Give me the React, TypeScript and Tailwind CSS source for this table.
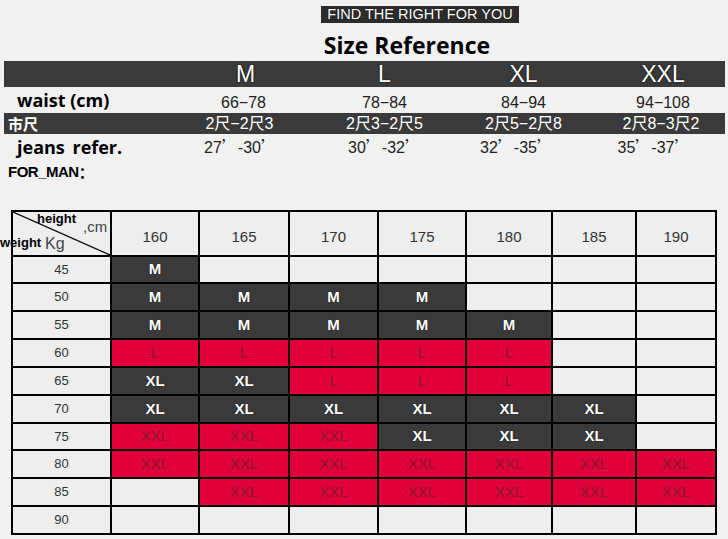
import React from 'react';

const sizes = ['M', 'L', 'XL', 'XXL'];
const waist = ['66−78', '78−84', '84−94', '94−108'];
const chi = ['2尺−2尺3', '2尺3−2尺5', '2尺5−2尺8', '2尺8−3尺2'];
const jeans = [['27', '30'], ['30', '32'], ['32', '35'], ['35', '37']];

const heights = [160, 165, 170, 175, 180, 185, 190];

// one entry per weight row, one letter per height column
const chart: [number, string[]][] = [
  [45, ['M', '', '', '', '', '', '']],
  [50, ['M', 'M', 'M', 'M', '', '', '']],
  [55, ['M', 'M', 'M', 'M', 'M', '', '']],
  [60, ['L', 'L', 'L', 'L', 'L', '', '']],
  [65, ['XL', 'XL', 'L', 'L', 'L', '', '']],
  [70, ['XL', 'XL', 'XL', 'XL', 'XL', 'XL', '']],
  [75, ['XXL', 'XXL', 'XXL', 'XL', 'XL', 'XL', '']],
  [80, ['XXL', 'XXL', 'XXL', 'XXL', 'XXL', 'XXL', 'XXL']],
  [85, ['', 'XXL', 'XXL', 'XXL', 'XXL', 'XXL', 'XXL']],
  [90, ['', '', '', '', '', '', '']],
];

const rowHeights = ['h-[25px]', 'h-[26px]', 'h-[26px]', 'h-[26px]', 'h-[26px]', 'h-[26px]', 'h-[25px]', 'h-[26px]', 'h-[26px]', 'h-[26px]'];

function Cell({ size }: { size: string }) {
  if (size === 'M' || size === 'XL') {
    return (
      <div className="bg-[#3a3a3a] flex items-center justify-center text-white font-bold text-[15px] [text-shadow:0_0_1px_#000]">
        {size}
      </div>
    );
  }
  if (size === 'L' || size === 'XXL') {
    return (
      <div className="bg-[#e2003a] flex items-center justify-center text-[#86182e] text-[15px]">
        {size}
      </div>
    );
  }
  return <div className="bg-[#eeeeee]" />;
}

export default function App() {
  return (
    <div className="w-[728px] h-[539px] overflow-hidden bg-[#f1f1f1] font-['Liberation_Sans',Arial,sans-serif] text-[#222]">
      {/* --- TITLE --- */}
      <div className="pt-[6px] flex flex-col items-center">
        <div className="ml-[112px] w-[198px] h-[17px] bg-[#2c2c2c] flex items-center justify-center text-white text-[14.5px] leading-none [text-shadow:0_0_1px_#000]">
          FIND THE RIGHT FOR YOU
        </div>
        <h1 className="mt-[6px] ml-[86px] h-[32px] font-['Open_Sans',sans-serif] font-bold text-[23px] leading-[32px] text-black">
          Size Reference
        </h1>
      </div>

      {/* --- SIZE TABLE --- */}
      <div className="ml-[4px] w-[721px]">
        <div className="h-[26px] bg-[#3a3a3a] grid grid-cols-[172px_139px_139px_139px_132px] items-center text-white text-[23px] leading-none [text-shadow:0_0_2px_#000]">
          <div />
          {sizes.map((s, i) => (
            <div key={s} className={i === 3 ? 'text-center pl-2' : 'text-center'}>{s}</div>
          ))}
        </div>
        <div className="h-[26px] grid grid-cols-[172px_139px_139px_139px_132px] items-center">
          <div className="pl-[13px] font-['Open_Sans',sans-serif] font-bold text-[18px] leading-none text-black">waist (cm)</div>
          {waist.map((w, i) => (
            <div key={w} className={`text-center text-[16px] leading-none pt-[6px] ${i === 3 ? 'pl-2' : ''} ${i === 0 ? 'pr-[4px]' : ''}`}>{w}</div>
          ))}
        </div>
        <div className="h-[21px] bg-[#3a3a3a] grid grid-cols-[172px_139px_139px_139px_132px] items-center text-white text-[16px] leading-none font-['Liberation_Sans','Noto_Sans_CJK_SC',sans-serif]">
          <div className="pl-[4px] font-['Noto_Sans_CJK_SC',sans-serif] font-bold text-[15px]">市尺</div>
          {chi.map((c, i) => (
            <div key={c} className={`text-center ${i === 3 ? 'pl-1' : ''} ${i === 0 ? 'pr-[12px]' : ''}`}>{c}</div>
          ))}
        </div>
        <div className="h-[26px] grid grid-cols-[172px_139px_139px_139px_132px] items-center">
          <div className="pl-[13px] font-['Open_Sans',sans-serif] font-bold text-[18px] leading-none text-black [word-spacing:3px]">jeans refer.</div>
          {jeans.map(([a, b], i) => (
            <div key={a} className={`text-center text-[16px] leading-none ${i === 0 ? 'pr-[10px]' : ''} ${i === 2 ? 'pr-[14px]' : ''} ${i === 3 ? 'pr-[10px]' : ''}`}>
              {a}<span className="font-['Noto_Sans_CJK_SC',sans-serif]">’</span>-{b}<span className="font-['Noto_Sans_CJK_SC',sans-serif]">’</span>
            </div>
          ))}
        </div>
        <div className="h-[22px] pl-[4px] flex items-center font-bold text-[15px] leading-none text-black tracking-[-0.5px]">
          FOR_MAN<span className="font-['Noto_Sans_CJK_SC',sans-serif]">：</span>
        </div>
      </div>

      {/* --- HEIGHT / WEIGHT CHART --- */}
      <div className="mt-[28px] ml-[11px] w-[706px] bg-black p-[2px] grid grid-cols-[97px_86px_88px_87px_86px_84px_82px_78px] gap-[2px]">
        {/* header */}
        <div className="h-[43px] bg-[#eeeeee] relative">
          <svg className="absolute inset-0" width="97" height="43" viewBox="0 0 97 43">
            <line x1="0" y1="0" x2="97" y2="43" stroke="#111" strokeWidth="1.3" />
          </svg>
          <span className="absolute left-[24px] top-[-3px] font-bold text-[13px] text-black">height</span>
          <span className="absolute left-[70px] top-[4px] text-[15px] text-[#444]">,cm</span>
          <span className="absolute left-[-13px] top-[21px] font-bold text-[13px] text-black">weight</span>
          <span className="absolute left-[32px] top-[20px] text-[16px] text-[#444]">Kg</span>
        </div>
        {heights.map((h) => (
          <div key={h} className="h-[43px] bg-[#eeeeee] flex items-center justify-center pt-2 text-[15px] text-[#333]">
            {h}
          </div>
        ))}

        {/* rows */}
        {chart.map(([weight, row], r) => (
          <React.Fragment key={weight}>
            <div className={`${rowHeights[r]} bg-[#eeeeee] flex items-center justify-center text-[13px] text-[#333]`}>
              {weight}
            </div>
            {row.map((s, c) => (
              <Cell key={c} size={s} />
            ))}
          </React.Fragment>
        ))}
      </div>
    </div>
  );
}
